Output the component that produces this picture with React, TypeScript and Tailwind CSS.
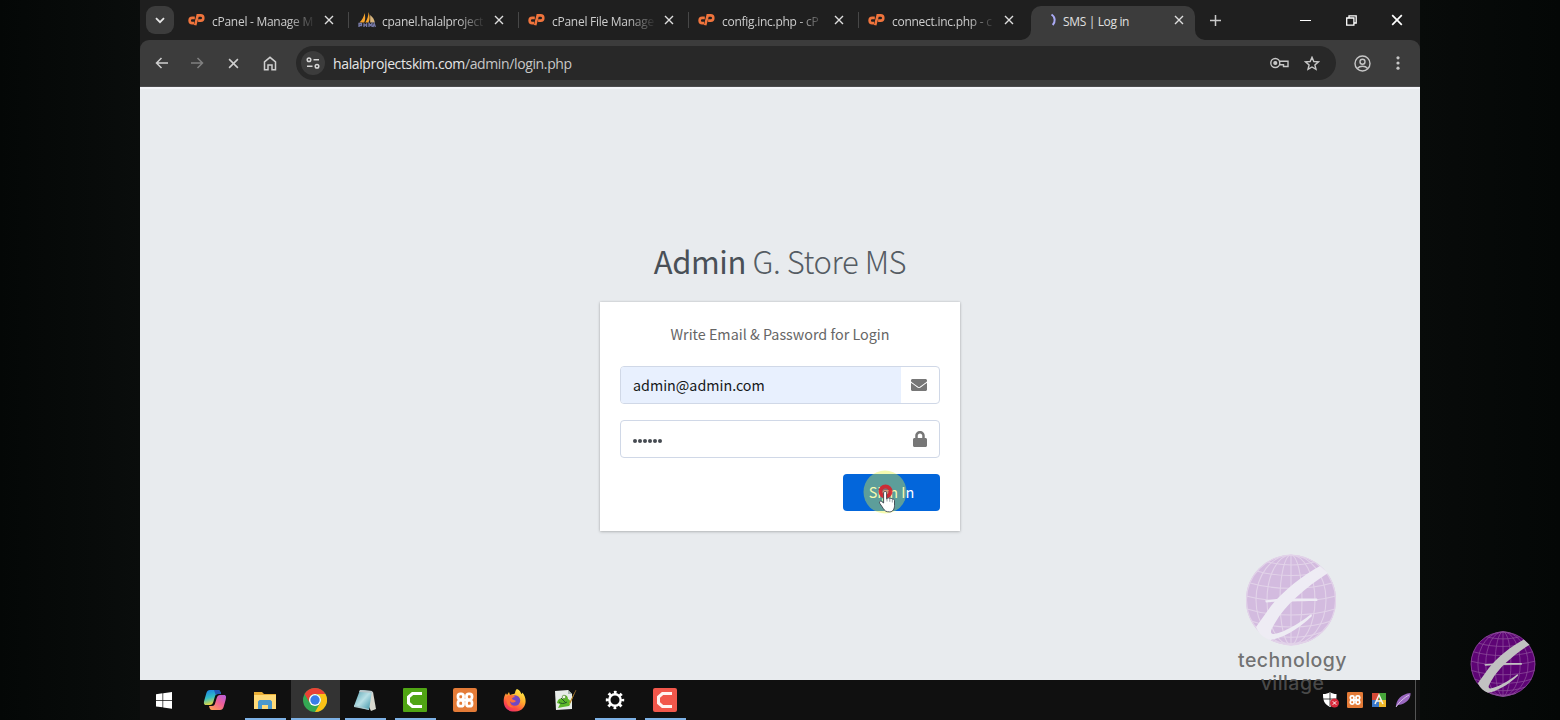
import React from "react";
import { FaEnvelope, FaLock } from "react-icons/fa";

const UI = "font-['Open_Sans','Noto_Sans',sans-serif]";
const SOURCE = "font-['Noto_Sans_CJK_SC','Noto_Sans',sans-serif]";

function CPanelIcon() {
  return (
    <svg width="17" height="14" viewBox="0 0 17 14" fill="none" stroke="#f0743c" strokeWidth="2.6">
      <path d="M6.800 4.900H4.200a2.600 2.600 0 0 0 0 5.200H6" />
      <path d="M7.200 12.300 9.700 2.400h3a2.500 2.500 0 0 1 0 5.200h-2.600" />
    </svg>
  );
}

function PmaIcon() {
  return (
    <svg width="18" height="16" viewBox="0 0 18 16">
      <path d="M6.500 1c1 4 1 7-.3 9.500H1.500C4 8 6 5 6.500 1Z" fill="#f5a32c" />
      <path d="M10.500 0c1.500 4 1.500 7.500 0 10.500H7.300C9.400 7 10.400 4 10.500 0Z" fill="#f5a32c" />
      <path d="M12.200 3c3.200 2.800 4.200 5 4.600 7.500h-4.600Z" fill="#d9b57c" />
      <path d="M1 15v-3.500h2.500v2H1M6 15v-3.700M6 13h2.600M8.600 11.300V15M11 15v-3.500l1.500 2 1.500-2V15M15 15l1.200-3.500 1.200 3.500" fill="none" stroke="#777aa8" strokeWidth="1.300" />
    </svg>
  );
}

function Cross({ size = 10, color = "#dedede" }: { size?: number; color?: string }) {
  return (
    <svg width={size} height={size} viewBox="0 0 10 10" stroke={color} strokeWidth="1.4" fill="none">
      <path d="m1 1 8 8M9 1 1 9" />
    </svg>
  );
}

function TabTitle({ children }: { children: React.ReactNode }) {
  return (
    <span className="w-[103px] shrink-0 whitespace-nowrap pt-[3px] text-[12px] tracking-[-0.27px] text-[#cdcdcd] [mask-image:linear-gradient(to_right,black_76px,transparent_104px)]">
      {children}
    </span>
  );
}

function Tab({ icon, title }: { icon: React.ReactNode; title: string }) {
  return (
    <div className="flex h-full w-[170px] shrink-0 items-center pl-2">
      <span className="flex w-6 shrink-0">{icon}</span>
      <TabTitle>{title}</TabTitle>
      <span className="ml-[8px] flex pl-px">
        <Cross />
      </span>
      <span className="ml-[14px] h-4 w-px bg-[#474747]" />
    </div>
  );
}

function TabStrip() {
  return (
    <div className="flex h-10 bg-[#1f1f1f]">
      <div className="flex w-10 shrink-0 items-center pl-1.5">
        <span className="flex size-7 items-center justify-center rounded-[9px] bg-[#3c3c3c]">
          <svg width="10" height="7" viewBox="0 0 10 7" fill="none" stroke="#e6e6e6" strokeWidth="1.8">
            <path d="m1 1.200 4 4 4-4" />
          </svg>
        </span>
      </div>
      <Tab icon={<CPanelIcon />} title="cPanel - Manage M" />
      <Tab icon={<PmaIcon />} title="cpanel.halalproject" />
      <Tab icon={<CPanelIcon />} title="cPanel File Manage" />
      <Tab icon={<CPanelIcon />} title="config.inc.php - cP" />
      <div className="flex w-[163px] shrink-0 items-center pl-2">
        <span className="flex w-6 shrink-0"><CPanelIcon /></span>
        <TabTitle>connect.inc.php - c</TabTitle>
        <span className="ml-[9px] flex"><Cross /></span>
      </div>
      <svg className="mt-auto -ml-[2px] shrink-0" width="10" height="10" viewBox="0 0 10 10"><path d="M10 0v10H0A10 10 0 0 0 10 0Z" fill="#3c3c3c" /></svg>
      <div className="mt-1.5 flex w-[164px] shrink-0 items-center rounded-t-[10px] bg-[#3c3c3c] pb-[6px] pl-[15px]">
        <svg width="11" height="14" viewBox="0 0 11 14" fill="none">
          <path d="M5.500 1.500c4 2.500 4 7.500 1.200 10.500" stroke="#aaaaf5" strokeWidth="2" />
        </svg>
        <span className="ml-[6px] w-[107px] whitespace-nowrap pt-[3px] text-[12px] tracking-[-0.35px] text-[#e0e0e0]">SMS | Log in</span>
        <span className="ml-[4px] flex"><Cross /></span>
      </div>
      <svg className="mt-auto shrink-0" width="10" height="10" viewBox="0 0 10 10"><path d="M0 0v10h10A10 10 0 0 1 0 0Z" fill="#3c3c3c" /></svg>
      <div className="flex flex-1 items-center pl-[5px]">
        <svg width="11" height="11" viewBox="0 0 11 11" stroke="#c9c9c9" strokeWidth="1.500"><path d="M5.500 0v11M0 5.500h11" /></svg>
        <div className="ml-auto flex items-center pr-[17px]">
          <span className="mr-[35px] h-px w-[11px] bg-white" />
          <svg className="mr-[34px]" width="11" height="11" viewBox="0 0 11 11" fill="none" stroke="#fff" strokeWidth="1.300"><path d="M.7 3h7.200v7.200H.7ZM3 3V.8h7.200V8H8" /></svg>
          <Cross size={12} color="#fff" />
        </div>
      </div>
    </div>
  );
}

function Toolbar() {
  return (
    <div className="bg-[#1f1f1f]">
      <div className="flex h-[47px] items-center rounded-t-[9px] border-b border-[#4b4b4d] bg-[#3c3c3c] pl-[15px]">
        <svg width="13" height="12" viewBox="0 0 13 12" fill="none" stroke="#cfcfcf" strokeWidth="1.500"><path d="M13 6H1.500M6.500 1l-5 5 5 5" /></svg>
        <svg className="ml-[23px]" width="13" height="12" viewBox="0 0 13 12" fill="none" stroke="#808080" strokeWidth="1.500"><path d="M0 6h11.500M6.500 1l5 5-5 5" /></svg>
        <span className="ml-[24px] flex"><Cross size={11} color="#cfcfcf" /></span>
        <svg className="ml-[24px]" width="14" height="15" viewBox="0 0 14 15" fill="none" stroke="#cfcfcf" strokeWidth="1.500"><path d="M1.500 5.800 7 1.300l5.500 4.500v8H9V9H5v4.800H1.500Z" /></svg>
        <div className="ml-[19px] flex h-[34px] w-[1040px] items-center rounded-full bg-[#282828] pl-[5px]">
          <span className="flex size-6 items-center justify-center rounded-full bg-[#3c3c3c]">
            <svg width="14" height="12" viewBox="0 0 14 12" fill="none" stroke="#d6d6d6" strokeWidth="1.500"><circle cx="3" cy="2.700" r="1.800" /><path d="M7.500 2.700H13M1 9.300h5.500" /><circle cx="11" cy="9.300" r="1.800" /></svg>
          </span>
          <span className="ml-2 text-[14px] tracking-[-0.37px] text-[#e6e6e6]">halalprojectskim.com<span className="text-[#c7c7c7]">/admin/login.php</span></span>
          <svg className="ml-auto" width="19" height="12" viewBox="0 0 19 12" fill="none" stroke="#c7c7c7" strokeWidth="1.400"><circle cx="5.300" cy="6" r="4.500" /><circle cx="5.300" cy="6" r="1.400" fill="#c7c7c7" /><path d="M9.600 4.300H18v5.200h-4.500V7.700H9.600" /></svg>
          <svg className="mr-[16px] ml-[15px]" width="16" height="15" viewBox="0 0 16 15" fill="none" stroke="#c7c7c7" strokeWidth="1.400"><path d="m8 1.300 1.800 4.200 4.600.4-3.500 3 1.100 4.500-4-2.400-4 2.400 1.100-4.500-3.500-3 4.600-.4Z" /></svg>
        </div>
        <svg className="ml-[18px]" width="17" height="17" viewBox="0 0 17 17" fill="none" stroke="#c7c7c7" strokeWidth="1.400"><circle cx="8.500" cy="8.500" r="7.500" /><circle cx="8.500" cy="6.700" r="2.500" /><path d="M3.300 13.500c2.700-3 7.700-3 10.400 0" /></svg>
        <svg className="ml-[25px]" width="4" height="14" viewBox="0 0 4 14" fill="#c7c7c7"><circle cx="2" cy="1.800" r="1.600" /><circle cx="2" cy="7" r="1.600" /><circle cx="2" cy="12.200" r="1.600" /></svg>
      </div>
    </div>
  );
}

function Pointer() {
  return (
    <svg className="absolute -top-[8px] left-[15px]" width="50" height="52" viewBox="0 0 50 52">
      <circle cx="27" cy="26" r="21.500" fill="#e5f23a" opacity=".4" />
      <circle cx="27.500" cy="25.500" r="5" fill="none" stroke="#dc1c28" strokeWidth="4" opacity=".88" />
      <circle cx="27.500" cy="25.500" r="3" fill="#b03945" opacity=".5" />
      <path d="M25.600 27c0-2 3-2 3 0v6l1-.8c.8-.6 1.900-.2 2.200.5 1-.7 2.100-.3 2.400.5 1.200-.4 2.300.2 2.300 1.500v5c0 3-1.500 6.200-4.800 6.200-3.700 0-5-1-6.500-3.500l-3.500-5.200c-.9-1.500.7-2.800 2-1.700l1.900 1.500Z" fill="white" stroke="#39424a" strokeWidth=".9" />
      <path d="M29 32v3.500M31.800 32.800v3M34.300 33.500v3" stroke="#65747b" strokeWidth=".7" />
    </svg>
  );
}

function Login() {
  return (
    <main className={`${SOURCE} flex h-[593px] flex-col items-center border-t-2 border-[#f3f4f8] bg-[#e8ebee] pt-[146px]`}>
      <h1 className="flex h-[52px] w-[252px] items-center justify-center whitespace-nowrap text-[31px] leading-[52px] tracking-[-0.42px] text-[#495057]">
        <b className="font-normal">Admin</b>&nbsp;<span className="font-light text-[#555c63]">G. Store MS</span>
      </h1>
      <div className="mt-[15px] h-[229px] w-[360px] bg-white px-5 pt-5 shadow-[0_0_2px_rgba(0,0,0,.16),0_1px_3px_rgba(0,0,0,.18)]">
        <p className="h-6 whitespace-nowrap text-center text-[14.35px] leading-[23px] text-[#666]">Write Email &amp; Password for Login</p>
        <div className="mt-5 flex h-[38px] overflow-hidden rounded-[4px] border border-[#d0d8e7] bg-white">
          <div className="flex w-[280px] items-center bg-[#e8f0fe] pb-px pl-3 text-[14.3px] text-[#151719]">admin@admin.com</div>
          <div className="flex flex-1 items-center justify-center pr-[2px] text-[#777]"><FaEnvelope size={16} /></div>
        </div>
        <div className="mt-4 flex h-[38px] items-center rounded-[4px] border border-[#d0d8e7] pr-[11px] pl-[12px]">
          <div className="flex gap-px pt-[3px]">
            {[0, 1, 2, 3, 4, 5].map((n) => <i key={n} className="size-1 rounded-full bg-[#464b52]" />)}
          </div>
          <FaLock className="ml-auto text-[#777]" size={16} viewBox="0 0 448 512" />
        </div>
        <button className="relative mt-4 ml-auto block h-[37px] w-[97px] rounded-[4px] bg-[#0366db] pb-[2px] text-[14.4px] text-white">
          Sign In
          <Pointer />
        </button>
      </div>
    </main>
  );
}

function Xampp({ size }: { size: number }) {
  return (
    <svg width={size} height={size} viewBox="0 0 24 24">
      <rect width="24" height="24" rx="2" fill="#e47b37" />
      <g fill="none" stroke="#fff" strokeWidth="2.8">
        <rect x="5" y="5.800" width="5.500" height="5.500" rx="2.300" />
        <rect x="13.500" y="5.800" width="5.500" height="5.500" rx="2.300" />
        <rect x="5" y="12.700" width="5.500" height="5.500" rx="2.300" />
        <rect x="13.500" y="12.700" width="5.500" height="5.500" rx="2.300" />
        <path d="M9 12h6" />
      </g>
      <path d="M7.700 8.300v2M16.300 8.300v2M7.700 13.700v2M16.300 13.700v2" stroke="#e47b37" strokeWidth="1.800" />
    </svg>
  );
}

function Camtasia({ red = false }: { red?: boolean }) {
  return (
    <svg width="24" height="24" viewBox="0 0 24 24">
      <rect width="24" height="24" rx={red ? 2 : 1} fill={red ? "#f2574b" : "#50a514"} />
      <path d="M19 5.500H9.500l-4 3.500v6l4 3.500H19" fill="none" stroke={red ? "#fff4f1" : "#fff"} strokeWidth="3" />
    </svg>
  );
}

function TaskItem({ children, line = false, active = false }: { children: React.ReactNode; line?: boolean; active?: boolean }) {
  return (
    <div className="flex h-10 w-[50px] shrink-0 justify-center">
      <div className={active ? "flex w-[49px] flex-col items-center bg-[#333]" : "flex w-[41px] flex-col items-center"}>
        <span className="flex flex-1 items-center justify-center pt-[2px] pr-px">{children}</span>
        <span className={line ? "h-[2px] w-full bg-[#7db1e5]" : "h-[2px] w-full"} />
      </div>
    </div>
  );
}

function Taskbar() {
  return (
    <div className="flex h-10 bg-[#101010]">
      <div className="flex">
        <div className="flex w-[50.500px] items-center pl-4">
          <svg width="16" height="17" viewBox="0 0 16 17" fill="#fff"><path d="m0 2.200 6.500-.9v6.600H0ZM7.200 1.200 16 0v7.900H7.200ZM0 8.700h6.500v6.600L0 14.500ZM7.200 8.700H16v8l-8.800-1.200Z" /></svg>
        </div>
        <TaskItem>
          <svg width="24" height="22" viewBox="0 0 24 22">
            <defs>
              <linearGradient id="copA" x1="0" y1="0" x2=".3" y2="1"><stop stopColor="#197be7" /><stop offset=".55" stopColor="#33bdc4" /><stop offset="1" stopColor="#e7d83d" /></linearGradient>
              <linearGradient id="copB" x1="1" y1="0" x2=".2" y2="1"><stop stopColor="#b15ee0" /><stop offset=".5" stopColor="#ef5f96" /><stop offset="1" stopColor="#ff9d58" /></linearGradient>
            </defs>
            <path d="M7 1h8c2 0 2.500 2 3 4h-3c-2 0-2.700 1-3.200 3l-1.500 5c-.6 2-1.600 3-3.500 3H3c-2.500 0-2.300-2.500-1.600-5l2-7C4 2 5.200 1 7 1Z" fill="url(#copA)" />
            <path d="M17 21H9c-2 0-2.500-2-3-4h3c2 0 2.700-1 3.200-3l1.500-5c.6-2 1.600-3 3.500-3H21c2.500 0 2.300 2.500 1.600 5l-2 7c-.6 2-1.800 3-3.600 3Z" fill="url(#copB)" />
            <path d="M11 1h4c2 0 2.500 2 3 4h-3c-1 0-1.800.3-2.300 1Z" fill="#2456b7" />
          </svg>
        </TaskItem>
        <TaskItem line>
          <svg width="22" height="19" viewBox="0 0 22 19"><path d="M0 1h8l2 2h12v15H0Z" fill="#e9ae36" /><path d="M0 4h22v14H0Z" fill="#ffda78" /><path d="M4 18v-7.500L5.500 9h11l1.500 1.500V18h-4v-4H8v4Z" fill="#4b98ce" /></svg>
        </TaskItem>
        <TaskItem line active>
          <svg width="24" height="24" viewBox="0 0 24 24">
            <circle cx="12" cy="12" r="12" fill="#34a853" />
            <path d="M1.600 6A12 12 0 0 1 22.400 6H12a6 6 0 0 0-5.200 9Z" fill="#e94235" />
            <path d="M22.400 6A12 12 0 0 1 12 24l5.200-9A6 6 0 0 0 17.200 9L14 6Z" fill="#fbc116" />
            <circle cx="12" cy="12" r="6" fill="#fff" /><circle cx="12" cy="12" r="4.700" fill="#397de9" />
          </svg>
        </TaskItem>
        <TaskItem line>
          <svg width="24" height="22" viewBox="0 0 24 22"><defs><linearGradient id="pad" x1="0" y1="0" x2="1" y2="1"><stop stopColor="#4e9cac" /><stop offset=".5" stopColor="#b8e0e6" /><stop offset="1" stopColor="#338da2" /></linearGradient></defs><path d="m8 1 12 2 3 17-5 2Z" fill="#d8d8cf" /><path d="m7 1 12 1-3 19-15-4Z" fill="url(#pad)" /><path d="m7 1 12 1 1 2L6 3Z" fill="#b8c5c9" /><path d="m1 16 15 4v1L1 18Z" fill="#a9c8cd" /></svg>
        </TaskItem>
        <TaskItem line><Camtasia /></TaskItem>
        <TaskItem><Xampp size={24} /></TaskItem>
        <TaskItem>
          <svg width="24" height="24" viewBox="0 0 24 24">
            <defs><linearGradient id="fox" x1=".8" y1="0" x2=".2" y2="1"><stop stopColor="#fff34b" /><stop offset=".4" stopColor="#ffac2d" /><stop offset=".75" stopColor="#ff4d43" /><stop offset="1" stopColor="#e52b71" /></linearGradient></defs>
            <path d="M14 1c3 1 3.500 3.500 4.500 5 .8-.4.700-1 .7-1.500 6 6 4.400 18.500-7 19C2 24 .5 16 .7 12c.1-3 1.300-5 2.300-6.700L4 7l2-3 1 3c3-1 5-1.500 5-1.500S12 2.500 14 1Z" fill="url(#fox)" />
            <circle cx="12" cy="12.500" r="5.200" fill="#7048c4" />
            <path d="M4 8c4-2 7-1 8 1-2 0-3 1-3 2 1 1 3 1 4 2-2 2-5 2-6 0-.5 4 2 6 5 6-6 2-10-3-8-11Z" fill="#ff7138" />
          </svg>
        </TaskItem>
        <TaskItem>
          <svg width="23" height="22" viewBox="0 0 23 22"><path d="m1 2 13-1 4 4v15L2 21Z" fill="#e8ece9" /><path d="m14 1 4 4h-4Z" fill="#a7b6b0" /><path d="M3 14c1-5 4-5 6-4 0-6 5-4 5 0 3 1 3 5 1 7l-6 1-5 1 2-4Z" fill="#5bb728" /><path d="M5 13c2 2 5 2 8 0M7 9l5 5" stroke="#245428" fill="none" /><circle cx="10" cy="8" r="1.800" fill="#eff7e6" stroke="#4f8430" strokeWidth=".7" /><path d="m22 1-5 12-2 3 1-4Z" fill="#f1bd38" /><path d="m22 1-6 13" stroke="#8b6129" strokeWidth=".7" /></svg>
        </TaskItem>
        <TaskItem line>
          <svg width="20" height="20" viewBox="0 0 20 20" fill="none" stroke="#fff"><circle cx="10" cy="10" r="5.700" strokeWidth="2.400" /><circle cx="10" cy="10" r="7.700" strokeWidth="3" strokeDasharray="2.700 3.348" strokeDashoffset="1.350" /></svg>
        </TaskItem>
        <TaskItem line><Camtasia red /></TaskItem>
      </div>
      <div className="ml-auto flex items-center gap-2">
        <svg width="16" height="16" viewBox="0 0 16 16"><path d="M7 0c2 1.500 4 2 6.500 2 0 6-.5 10-6.500 13C1 12 0 8 0 2c3 0 5-.5 7-2Z" fill="#fff" /><path d="M7 0v14M0 7h13" stroke="#171717" strokeWidth=".8" /><circle cx="11.500" cy="11" r="4.500" fill="#d72b3c" /><path d="m9.800 9.300 3.400 3.400m0-3.400-3.400 3.400" stroke="#fff" /></svg>
        <Xampp size={16} />
        <svg width="16" height="16" viewBox="0 0 16 16"><path d="M1 1h7v7H1Z" fill="#d44a37" /><path d="M8 1h7v7H8Z" fill="#46a439" /><path d="M1 8h7v7H1Z" fill="#3978ca" /><path d="M8 8h7v7H8Z" fill="#efb829" /><path d="M4 12 8 3l4 9M5.500 9h5" fill="none" stroke="#f6f4ec" strokeWidth="1.500" /></svg>
        <svg width="16" height="16" viewBox="0 0 16 16"><path d="M15.500 1C16 6 12 12 3 13l-2 2C1 8 6 2 15.500 1Z" fill="#9b68c1" /><path d="M1 15C5 9 9 6 14 3" stroke="#eadcf4" fill="none" strokeWidth=".8" /></svg>
        <span className="-ml-[4px] mr-[4px] h-10 w-px bg-[#555]" />
      </div>
    </div>
  );
}

function Globe({ size, fill, grid, letter }: { size: number; fill: string; grid: string; letter: string }) {
  return (
    <svg width={size} height={size} viewBox="0 0 92 92">
      <g transform="translate(1 1)">
        <circle cx="45" cy="45" r="45" fill={fill} />
        <g fill="none" stroke={grid} strokeWidth="1.1">
          <circle cx="45" cy="45" r="44.500" />
          <ellipse cx="45" cy="45" rx="35" ry="45" />
          <ellipse cx="45" cy="45" rx="24" ry="45" />
          <ellipse cx="45" cy="45" rx="11" ry="45" />
          <path d="M45 0v90M22 7c14 4 32 4 46 0M11 16c19 6 49 6 68 0M4 28c23 7 59 7 82 0M0 41c26 7 64 7 90 0M1 54c25 8 63 8 88 0M5 66c22 8 58 8 80 0M14 77c18 7 44 7 62 0M27 86c11 3 25 3 36 0" />
        </g>
        <path d="M74 11C57 20 37 36 25 51L10 72c3 7 8 11 14 13 10-1 28-10 42-24l-.7-2C53 69 35 79 27 79c-3-1-3-3 2-11C39 50 59 33 82 18Z" fill={letter} />
        <path d="M19 45.500C31 43 52 43.500 71 43.500q1 1.500 0 2.500c-20 0-37 0-51 1.500Z" fill={letter} />
      </g>
    </svg>
  );
}

export default function App() {
  return (
    <div className="relative flex h-[720px] w-[1560px] justify-center overflow-hidden bg-[linear-gradient(90deg,#040706_0,#0a0d0c_9%,#080b0a_91%,#040706_100%)]">
      <div className={`${UI} w-[1280px]`}>
        <TabStrip />
        <Toolbar />
        <Login />
        <Taskbar />
      </div>
      <div className="pointer-events-none absolute top-[554px] left-[1232px] flex w-[121px] flex-col items-center">
        <div className="flex w-full justify-center pr-[3px]">
          <Globe size={92} fill="#d3bbdf" grid="#e2d3e9" letter="#eeecf4" />
        </div>
        <p className="mt-[3px] text-center font-['Inter',sans-serif] text-[19.5px] font-medium leading-[23px] tracking-[0.45px] text-[rgba(87,87,87,.83)]">technology<br />village</p>
      </div>
      <div className="absolute top-[631px] left-[1470px]">
        <Globe size={66} fill="#5e0475" grid="#8a4b98" letter="#c1c1c1" />
      </div>
    </div>
  );
}
